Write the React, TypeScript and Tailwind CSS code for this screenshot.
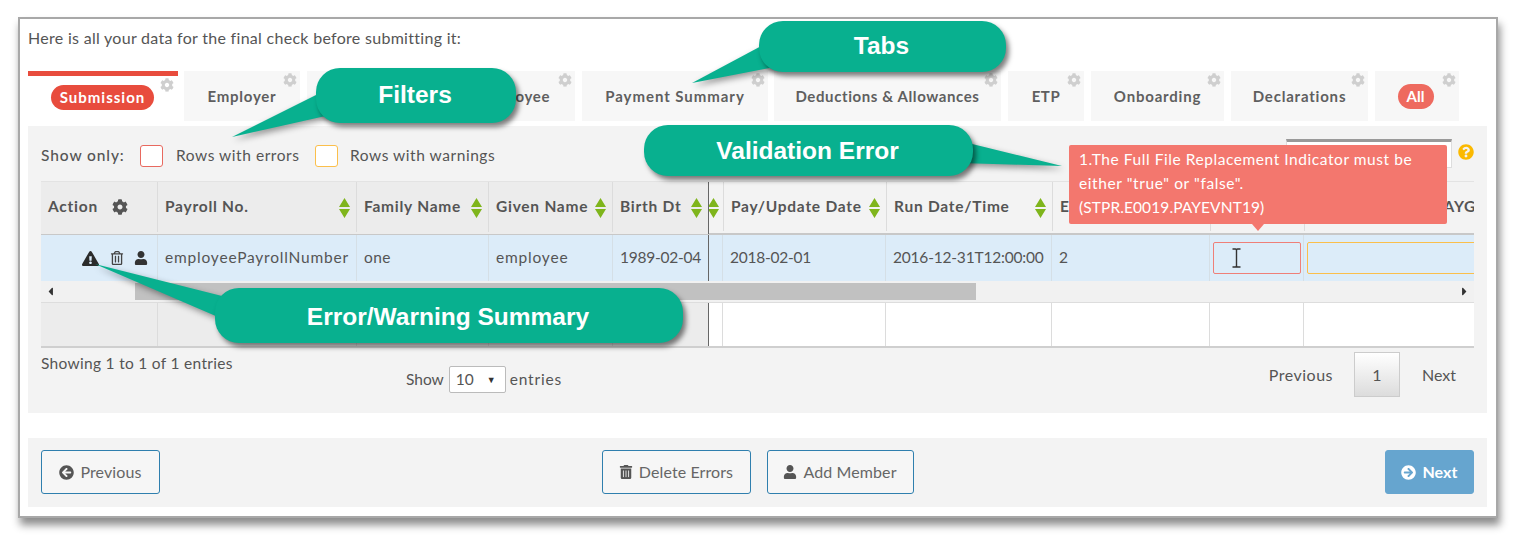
import React from "react";
import {
  FaCog,
  FaExclamationTriangle,
  FaRegTrashAlt,
  FaTrashAlt,
  FaUser,
  FaQuestionCircle,
  FaArrowCircleLeft,
  FaArrowCircleRight,
  FaCaretLeft,
  FaCaretRight,
} from "react-icons/fa";

const widths = [117, 199, 132, 124, 96, 14, 163, 166, 158, 94, 170];

function Sort() {
  return (
    <svg width="11" height="20" viewBox="0 0 11 20" className="shrink-0 mt-[2px]">
      <path d="M5.5 0 L11 9 H0 Z M0 11 H11 L5.5 20 Z" fill="#7fb51c" />
    </svg>
  );
}

function Tab({ label, w, ml, track }: { label?: string; w: string; ml?: string; track?: string }) {
  return (
    <div className={`relative h-[50px] ${w} ${ml ?? "ml-[7px]"} ${track ?? "tracking-[0.6px]"} bg-[#f7f7f7] flex items-center justify-center text-[15px] font-bold text-[#5f5f5f]`}>
      {label}
      <FaCog className="absolute right-[3px] top-[2px] text-[14px] text-[#cfcfcf]" />
    </div>
  );
}

function HeadCell({ i, label, sort, cls }: { i: number; label?: string; sort?: boolean; cls?: string }) {
  return (
    <div
      style={{ width: widths[i] }}
      className={`shrink-0 h-full flex items-center justify-between pl-[7px] pr-[6px] border-r border-[#dcdcdc] overflow-hidden whitespace-nowrap ${cls ?? ""}`}
    >
      <span>{label}</span>
      {sort && <Sort />}
    </div>
  );
}

function BodyCell({ i, children, cls }: { i: number; children?: React.ReactNode; cls?: string }) {
  return (
    <div
      style={{ width: widths[i] }}
      className={`shrink-0 h-full flex items-center pl-[7px] border-r overflow-hidden whitespace-nowrap ${cls ?? "border-[#dcdcdc]"}`}
    >
      {children}
    </div>
  );
}

function Callout({ label, cls }: { label: string; cls: string }) {
  return (
    <div
      className={`absolute flex items-center justify-center pr-[2px] bg-[#08b08f] text-white font-['Liberation_Sans',sans-serif] font-bold text-[24.5px] shadow-[3px_4px_5px_rgba(0,0,0,0.5)] ${cls}`}
    >
      {label}
    </div>
  );
}

function Btn({ icon, label, cls }: { icon: React.ReactNode; label: string; cls: string }) {
  return (
    <button className={`h-[44px] flex items-center justify-center gap-[6px] rounded-[3px] border text-[16px] tracking-[0.1px] ${cls}`}>
      {icon}
      {label}
    </button>
  );
}

export default function App() {
  return (
    <div className="relative w-[1514px] h-[541px] bg-white overflow-hidden pl-[18px] pt-[17px] font-['Lato',sans-serif] text-[#555]">
      <div className="w-[1480px] h-[501px] border-2 border-[#a8a8a8] bg-white px-[8px] shadow-[2px_7px_8px_rgba(0,0,0,0.45)] flex flex-col">
        <div className="h-[38px] flex items-center text-[16px] tracking-[0.29px] leading-[24px]">
          Here is all your data for the final check before submitting it:
        </div>

        <div className="mt-[14px] flex items-start h-[55px]">
          <div className="relative w-[150px] h-[55px] bg-white border-t-[5px] border-[#e84c3d] flex items-start justify-start pl-[23px] pt-[9px]">
            <span className="w-[103px] h-[25px] rounded-full bg-[#e84c3d] text-white font-bold text-[15px] tracking-[1px] flex items-center justify-center">
              Submission
            </span>
            <FaCog className="absolute right-[4px] top-[2px] text-[14px] text-[#cfcfcf]" />
          </div>
          <Tab label="Employer" w="w-[116px]" ml="ml-[6px]" track="tracking-[0.75px]" />
          <Tab w="w-[141px]" />
          <Tab label="Employee" w="w-[120px]" />
          <Tab label="Payment Summary" w="w-[186px]" track="tracking-[0.95px]" />
          <Tab label="Deductions & Allowances" w="w-[227px]" ml="ml-[6px]" />
          <Tab label="ETP" w="w-[76px]" />
          <Tab label="Onboarding" w="w-[133px]" track="tracking-[0.8px]" />
          <Tab label="Declarations" w="w-[137px]" track="tracking-[0.8px]" />
          <div className="relative ml-[7px] w-[84px] h-[50px] bg-[#f7f7f7] flex items-center justify-center pr-[3px]">
            <span className="w-[36px] h-[25px] rounded-full bg-[#ee6a5f] text-white font-bold text-[15px] flex items-center justify-center">
              All
            </span>
            <FaCog className="absolute right-[3px] top-[2px] text-[14px] text-[#cfcfcf]" />
          </div>
        </div>

        <div className="w-[1459px] h-[287px] bg-[#f3f3f3] px-[13px] flex flex-col">
          <div className="h-[55px] flex items-center text-[15.5px] tracking-[0.55px]">
            <span className="w-[99px] font-medium mt-[5px] tracking-[0.9px]">Show only:</span>
            <span className="w-[23px] h-[22px] rounded-[3px] border border-[#e8695f] bg-white mt-[4px]" />
            <span className="ml-[13px] w-[139px] mt-[5px]">Rows with errors</span>
            <span className="w-[23px] h-[22px] rounded-[3px] border border-[#fbbf4b] bg-white mt-[4px]" />
            <span className="ml-[12px] mt-[5px]">Rows with warnings</span>
            <div className="ml-auto mr-[22px] w-[166px] h-[29px] bg-white border border-[#ddd] border-t-[3px] border-t-[#999]" />
            <FaQuestionCircle className="absolute left-[1458px] top-[144px] text-[16px] text-[#fbb900]" />
          </div>

          <div className="w-[1433px] overflow-hidden">
            <div className="flex h-[54px] pb-[2px] border-b-2 border-[#c8c8c8] bg-[#f3f3f3] text-[15.5px] font-bold tracking-[0.75px] border-t border-t-[#e3e3e3]">
              <div className="flex h-[50px] -mb-[2px] box-content pb-[2px] bg-[#ececec] border-r border-[#666]" style={{ width: 667 }}>
                <div style={{ width: widths[0] }} className="shrink-0 h-full flex items-center pl-[7px] gap-[14px] border-r border-[#dcdcdc]">
                  <span>Action</span>
                  <FaCog className="text-[16px] text-[#555]" />
                </div>
                <HeadCell i={1} label="Payroll No." sort />
                <HeadCell i={2} label="Family Name" sort />
                <HeadCell i={3} label="Given Name" sort />
                <div style={{ width: 95 }} className="shrink-0 h-full flex items-center justify-between pl-[7px] pr-[6px]">
                  <span>Birth Dt</span>
                  <Sort />
                </div>
              </div>
              <div style={{ width: 15 }} className="shrink-0 h-full flex items-center border-r border-[#dcdcdc] overflow-hidden">
                <div className="-ml-[1px] flex items-center">
                  <Sort />
                </div>
              </div>
              <HeadCell i={6} label="Pay/Update Date" sort />
              <HeadCell i={7} label="Run Date/Time" sort />
              <HeadCell i={8} label="E" />
              <HeadCell i={9} />
              <div style={{ width: 170 }} className="shrink-0 h-full flex items-center pl-[129px] overflow-hidden whitespace-nowrap">
                PAYGW
              </div>
            </div>

            <div className="flex h-[46px] bg-[#dcecf9] text-[15.5px]">
              <div style={{ width: widths[0] }} className="shrink-0 h-full flex items-center pl-[41px] border-r border-[#d5dfe6]">
                <FaExclamationTriangle className="text-[17px] text-[#2b2b2b]" />
                <FaRegTrashAlt className="ml-[11px] text-[14px] text-[#444]" />
                <FaUser className="ml-[10px] text-[14px] text-[#333]" />
              </div>
              <BodyCell i={1} cls="border-[#d5dfe6] tracking-[0.8px]">employeePayrollNumber</BodyCell>
              <BodyCell i={2} cls="border-[#d5dfe6] tracking-[0.4px]">one</BodyCell>
              <BodyCell i={3} cls="border-[#d5dfe6] tracking-[0.8px]">employee</BodyCell>
              <BodyCell i={4} cls="border-[#666] tracking-[-0.25px]">1989-02-04</BodyCell>
              <BodyCell i={5} cls="border-[#d5dfe6]" />
              <BodyCell i={6} cls="border-[#d5dfe6] tracking-[-0.25px]">2018-02-01</BodyCell>
              <BodyCell i={7} cls="border-[#d5dfe6] tracking-[-0.2px]">2016-12-31T12:00:00</BodyCell>
              <BodyCell i={8} cls="border-[#d5dfe6]">2</BodyCell>
              <div style={{ width: widths[9] }} className="shrink-0 h-full flex items-center pl-[3px] border-r border-[#d5dfe6]">
                <div className="w-[88px] h-[32px] rounded-[2px] border border-[#ef7f78] flex items-center pl-[17px]">
                  <svg width="11" height="20" viewBox="0 0 11 20" fill="none" stroke="#333" strokeWidth="1.4">
                    <path d="M1.5 1 H4.5 Q5.5 1 5.5 2.5 V17.5 Q5.5 19 4.5 19 H1.5 M9.5 1 H6.5 Q5.5 1 5.5 2.5 M5.5 17.5 Q5.5 19 6.5 19 H9.5" />
                  </svg>
                </div>
              </div>
              <div style={{ width: widths[10] }} className="shrink-0 h-full flex items-center pl-[3px]">
                <div className="w-[180px] shrink-0 h-[32px] rounded-[2px] border border-[#fbbf4b]" />
              </div>
            </div>

            <div className="h-[22px] bg-[#f1f1f1] flex items-center border-b border-[#ddd]">
              <div className="w-[94px] h-full flex items-center pl-[3px]">
                <FaCaretLeft className="text-[13px] text-[#333]" />
              </div>
              <div className="w-[841px] h-[17px] -mt-[1px] bg-[#c1c1c1]" />
              <div className="flex-1 h-full flex items-center justify-end pr-[3px]">
                <FaCaretRight className="text-[13px] text-[#333]" />
              </div>
            </div>

            <div className="flex h-[45px] border-b-2 border-[#cfcfcf] bg-white">
              <BodyCell i={0} cls="border-[#dcdcdc] bg-[#ececec]" />
              <BodyCell i={1} cls="border-[#dcdcdc] bg-[#ececec]" />
              <BodyCell i={2} cls="border-[#dcdcdc] bg-[#ececec]" />
              <BodyCell i={3} cls="border-[#dcdcdc] bg-[#ececec]" />
              <BodyCell i={4} cls="border-[#666] bg-[#ececec]" />
              <BodyCell i={5} />
              <BodyCell i={6} />
              <BodyCell i={7} />
              <BodyCell i={8} />
              <BodyCell i={9} />
              <div style={{ width: widths[10] }} />
            </div>
          </div>

          <div className="flex items-start text-[15.5px] mt-[4px]">
            <div className="w-[365px] leading-[22px] tracking-[0.3px]">Showing 1 to 1 of 1 entries</div>
            <div className="flex items-center pt-[14px]">
              <span>Show</span>
              <div className="ml-[5px] w-[57px] h-[27px] bg-white border border-[#bbb] rounded-[2px] flex items-center justify-between pl-[6px] pr-[9px]">
                <span>10</span>
                <span className="text-[9px] text-[#333]">▼</span>
              </div>
              <span className="ml-[4px] tracking-[0.8px]">entries</span>
            </div>
            <div className="ml-auto flex items-center pr-[18px] text-[16px]">
              <span className="tracking-[0.5px]">Previous</span>
              <span className="ml-[21px] w-[46px] h-[45px] border border-[#ccc] bg-linear-to-b from-white to-[#dcdcdc] flex items-center justify-center">
                1
              </span>
              <span className="ml-[22px]">Next</span>
            </div>
          </div>
        </div>

        <div className="mt-[25px] w-[1459px] h-[69px] bg-[#f3f3f3] px-[13px] pb-[1px] grid grid-cols-[1fr_auto_1fr] items-center">
          <Btn
            icon={<FaArrowCircleLeft className="text-[15px] text-[#555]" />}
            label="Previous"
            cls="w-[119px] justify-self-start border-[#2f7fae] bg-[#f6f6f6] text-[#666]"
          />
          <div className="flex gap-[16px]">
            <Btn
              icon={<FaTrashAlt className="text-[14px] text-[#555]" />}
              label="Delete Errors"
              cls="w-[149px] border-[#2f7fae] bg-[#f6f6f6] text-[#666]"
            />
            <Btn
              icon={<FaUser className="text-[14px] text-[#555]" />}
              label="Add Member"
              cls="w-[147px] border-[#2f7fae] bg-[#f6f6f6] text-[#666]"
            />
          </div>
          <Btn
            icon={<FaArrowCircleRight className="text-[15px] text-white" />}
            label="Next"
            cls="w-[89px] justify-self-end border-[#66a5cf] bg-[#66a5cf] text-white font-bold"
          />
        </div>
      </div>

      <div className="absolute left-[1069px] top-[145px] w-[378px] h-[79px] rounded-[2px] bg-[#f3776e] text-white text-[15.5px] leading-[24px] px-[10px] pt-[2px]">
        <p className="tracking-[0.56px]">1.The Full File Replacement Indicator must be</p>
        <p className="tracking-[0.6px]">either "true" or "false".</p>
        <p className="tracking-[0.1px]">(STPR.E0019.PAYEVNT19)</p>
        <span className="absolute left-[183px] top-[79px] border-x-[6px] border-x-transparent border-t-[7px] border-t-[#f3776e]" />
      </div>

      <svg
        className="absolute left-0 top-0 w-[1514px] h-[541px] pointer-events-none drop-shadow-[2px_3px_3px_rgba(0,0,0,0.4)]"
        viewBox="0 0 1514 541"
      >
        <g fill="#08b08f">
          <polygon points="232,137 322,92 330,115" />
          <polygon points="692,83 765,44 780,66" />
          <polygon points="1062,166 960,141 960,163" />
          <polygon points="95,264 230,298 225,320" />
        </g>
      </svg>

      <Callout label="Filters" cls="left-[316px] top-[68px] w-[200px] h-[55px] rounded-[24px]" />
      <Callout label="Tabs" cls="left-[759px] top-[21px] w-[247px] h-[51px] rounded-[24px]" />
      <Callout label="Validation Error" cls="left-[644px] top-[125px] w-[329px] h-[51px] pt-[1px] rounded-[24px]" />
      <Callout label="Error/Warning Summary" cls="left-[215px] top-[288px] w-[468px] h-[55px] pt-[3px] rounded-[24px]" />
    </div>
  );
}
